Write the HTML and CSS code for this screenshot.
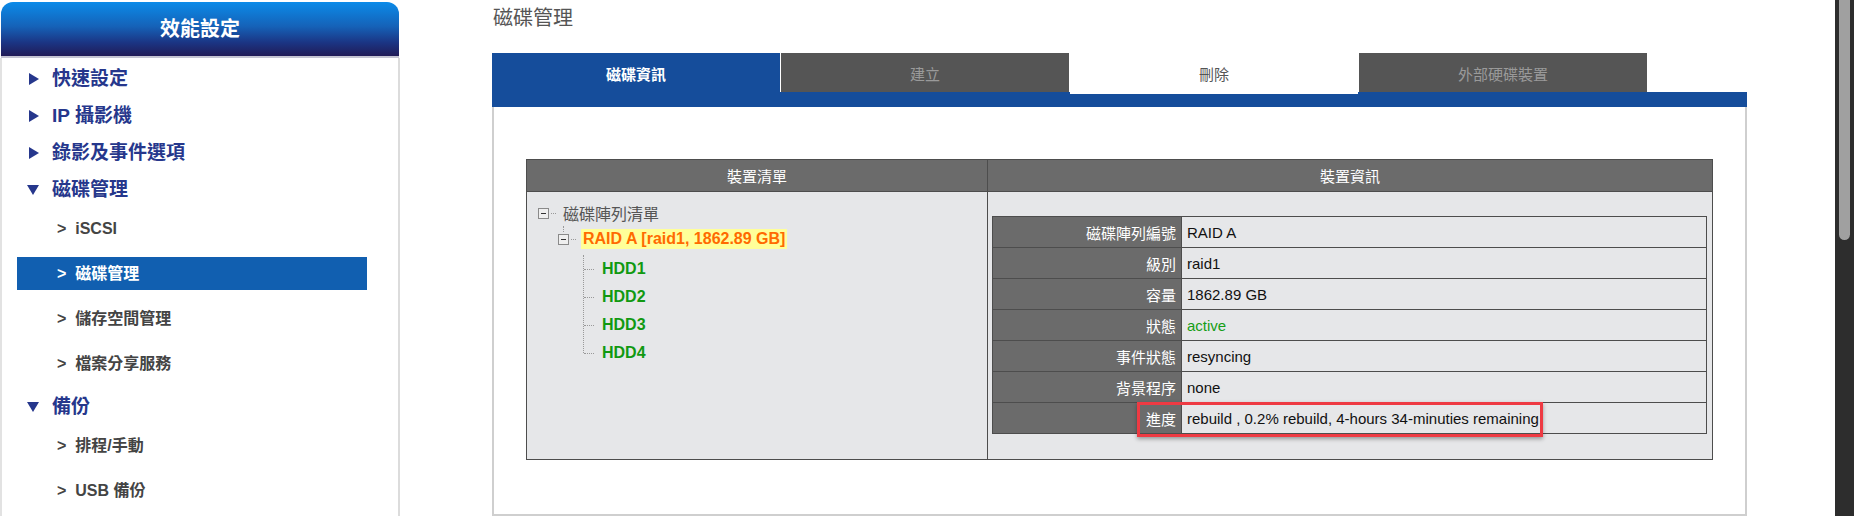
FILE: index.html
```html
<!DOCTYPE html>
<html lang="zh-Hant">
<head>
<meta charset="UTF-8">
<title>磁碟管理</title>
<link rel="stylesheet" href="styles.css">
</head>
<body>

<div class="page">
  <div class="sidebar">
    <div class="side-head">效能設定</div>
    <div class="menu">
      <div class="group-title"><span class="arrow"></span>快速設定</div>
      <div class="group-title"><span class="arrow"></span>IP 攝影機</div>
      <div class="group-title"><span class="arrow"></span>錄影及事件選項</div>
      <div class="group-title"><span class="arrow down"></span>磁碟管理</div>
      <div class="sub-list">
        <div class="sub-item">&gt;&nbsp; iSCSI</div>
        <div class="sub-item active">&gt;&nbsp; 磁碟管理</div>
        <div class="sub-item">&gt;&nbsp; 儲存空間管理</div>
        <div class="sub-item">&gt;&nbsp; 檔案分享服務</div>
      </div>
      <div class="group-title"><span class="arrow down"></span>備份</div>
      <div class="sub-list">
        <div class="sub-item">&gt;&nbsp; 排程/手動</div>
        <div class="sub-item">&gt;&nbsp; USB 備份</div>
      </div>
    </div>
  </div>

  <div class="main">
    <div class="page-title">磁碟管理</div>

    <div class="tabs">
      <div class="tab current">磁碟資訊</div>
      <div class="tab">建立</div>
      <div class="tab plain">刪除</div>
      <div class="tab">外部硬碟裝置</div>
    </div>
    <div class="tab-band"></div>

    <div class="panel">
      <table class="device">
        <tr>
          <th class="col-list">裝置清單</th>
          <th>裝置資訊</th>
        </tr>
        <tr class="device-body">
          <td class="tree-cell">
            <div class="tree-row root">
              <span class="toggle"></span><span class="tail"></span>
              <span class="node">磁碟陣列清單</span>
            </div>
            <div class="tree-row raid">
              <span class="toggle"></span><span class="tail"></span>
              <span class="raid-name">RAID A [raid1, 1862.89 GB]</span>
            </div>
            <ul class="disks">
              <li>HDD1</li>
              <li>HDD2</li>
              <li>HDD3</li>
              <li>HDD4</li>
            </ul>
          </td>
          <td class="info-cell">
            <div class="info-wrap">
              <table class="info">
                <tr><td class="label">磁碟陣列編號</td><td>RAID A</td></tr>
                <tr><td class="label">級別</td><td>raid1</td></tr>
                <tr><td class="label">容量</td><td>1862.89 GB</td></tr>
                <tr><td class="label">狀態</td><td class="ok">active</td></tr>
                <tr><td class="label">事件狀態</td><td>resyncing</td></tr>
                <tr><td class="label">背景程序</td><td>none</td></tr>
                <tr><td class="label">進度</td><td>rebuild , 0.2% rebuild, 4-hours 34-minuties remaining</td></tr>
              </table>
              <div class="highlight"></div>
            </div>
          </td>
        </tr>
      </table>
    </div>
  </div>
</div>

<div class="scrollbar"><div class="thumb"></div></div>

</body>
</html>
```

FILE: styles.css
```css
body {
  margin: 0;
  font-family: "Liberation Sans", "Noto Sans CJK TC", sans-serif;
  background: #fff;
  display: flex;
  height: 516px;
  overflow: hidden;
}

.page {
  flex: 1;
  display: flex;
  align-items: flex-start;
}

/* left menu */
.sidebar {
  width: 400px;
  flex-shrink: 0;
  padding-top: 2px;
}

.side-head {
  margin: 0 1px;
  height: 54px;
  line-height: 54px;
  border-radius: 12px 12px 0 0;
  background: linear-gradient(#0b8be9 0%, #1562b8 45%, #1b3584 75%, #211b57 100%);
  border-bottom: 2px solid #c4c4d2;
  color: #fff;
  font-size: 20px;
  font-weight: bold;
  text-align: center;
}

.menu {
  border-left: 2px solid #e2e2e2;
  border-right: 2px solid #dcdcdc;
  padding-top: 2px;
  height: 460px;
}

.group-title {
  height: 37px;
  line-height: 37px;
  color: #26378c;
  font-size: 19px;
  font-weight: bold;
  padding-left: 25px;
  display: flex;
  align-items: center;
}

/* triangles drawn with borders */
.arrow {
  width: 0;
  height: 0;
  margin: 0 13px 0 2px;
  border-left: 10px solid #26378c;
  border-top: 6px solid transparent;
  border-bottom: 6px solid transparent;
}

.arrow.down {
  margin: 1px 13px 0 0;
  border-left: 6px solid transparent;
  border-right: 6px solid transparent;
  border-top: 10px solid #26378c;
  border-bottom: none;
}

.sub-list {
  padding-bottom: 8px;
}

.sub-item {
  margin: 12px 0 0 15px;
  width: 350px;
  height: 33px;
  line-height: 33px;
  padding-left: 40px;
  box-sizing: border-box;
  color: #444;
  font-size: 16px;
  font-weight: bold;
}

.sub-item:first-child {
  margin-top: 4px;
}

.sub-item.active {
  background: #115fb0;
  color: #fff;
}

/* main area */
.main {
  margin-left: 92px;
  width: 1255px;
}

.page-title {
  padding: 6px 0 0 1px;
  line-height: 24px;
  font-size: 20px;
  color: #555;
}

.tabs {
  display: flex;
  gap: 1px;
  height: 39px;
  margin-top: 23px;
}

.tab {
  width: 288px;
  height: 39px;
  line-height: 44px;
  text-align: center;
  background: #555;
  color: #9a9a9a;
  font-size: 15px;
}

.tab.current {
  background: #154d9b;
  color: #fff;
  font-weight: bold;
}

.tab.plain {
  position: relative;
  height: 41px;
  background: #fff;
  color: #555;
}

.tab-band {
  height: 15px;
  background: #154d9b;
}

.panel {
  border: 2px solid #cfcfcf;
  border-top: none;
  padding: 52px 32px 54px 32px;
  background: #fff;
}

.device {
  width: 100%;
  border-collapse: collapse;
  background: #e6e7e9;
  font-size: 15px;
}

.device th {
  height: 31px;
  padding: 0;
  background: #6b6b6b;
  color: #fff;
  font-weight: normal;
  border: 1px solid #4d4d4d;
}

.device th.col-list {
  width: 460px;
}

.device-body {
  height: 268px;
}

.device-body > td {
  border: 1px solid #4d4d4d;
  vertical-align: top;
}

/* device tree */
.tree-cell {
  padding: 9px 0 0 11px;
}

.tree-row {
  display: flex;
  align-items: center;
}

.tree-row.root {
  height: 24px;
}

.tree-row.raid {
  height: 22px;
  margin: 3px 0 0 20px;
  position: relative;
}

.tree-row.raid::before {
  content: "";
  position: absolute;
  left: 5px;
  top: -2px;
  height: 6px;
  border-left: 1px dotted #999;
}

.toggle {
  width: 9px;
  height: 9px;
  border: 1px solid #8a8a8a;
  background: #efefef;
  position: relative;
}

.toggle::after {
  content: "";
  position: absolute;
  left: 2px;
  top: 4px;
  width: 5px;
  height: 1px;
  background: #333;
}

.tail {
  width: 5px;
  margin: 0 2px;
  border-top: 1px dotted #999;
}

.node {
  margin-left: 5px;
  font-size: 16px;
  color: #555;
}

.raid-name {
  margin-left: 3px;
  padding: 0 2px;
  line-height: 20px;
  background: #ffff99;
  color: #ff6a00;
  font-size: 16px;
  font-weight: bold;
}

.disks {
  list-style: none;
  margin: 5px 0 0 45px;
  padding: 0;
  border-left: 1px dotted #999;
  width: 80px;
}

.disks li {
  height: 28px;
  line-height: 28px;
  padding-left: 18px;
  color: #119911;
  font-size: 16px;
  font-weight: bold;
  position: relative;
}

.disks li::before {
  content: "";
  position: absolute;
  left: 0;
  top: 14px;
  width: 10px;
  border-top: 1px dotted #999;
}

.disks li:last-child {
  height: 14px;
}

/* device info */
.info-cell {
  padding: 24px 5px 0 4px;
}

.info-wrap {
  position: relative;
}

.info {
  width: 100%;
  border-collapse: collapse;
}

.info td {
  height: 30px;
  padding: 0 0 0 5px;
  border: 1px solid #4d4d4d;
  color: #111;
  font-size: 15px;
}

.info td.label {
  width: 183px;
  padding: 0 5px 0 0;
  text-align: right;
  background: #6b6b6b;
  color: #fff;
}

.info td.ok {
  color: #169e16;
}

.highlight {
  position: absolute;
  left: 145px;
  top: 186px;
  width: 400px;
  height: 29px;
  border: 3px solid #ee3a43;
  box-shadow: 0 2px 4px rgba(0, 0, 0, 0.35);
}

/* fake window scrollbar */
.scrollbar {
  width: 19px;
  flex-shrink: 0;
  background: #2d2d2d;
}

.thumb {
  margin-left: 4px;
  width: 11px;
  height: 240px;
  background: #a0a0a0;
  border-radius: 0 0 6px 6px;
}
```
